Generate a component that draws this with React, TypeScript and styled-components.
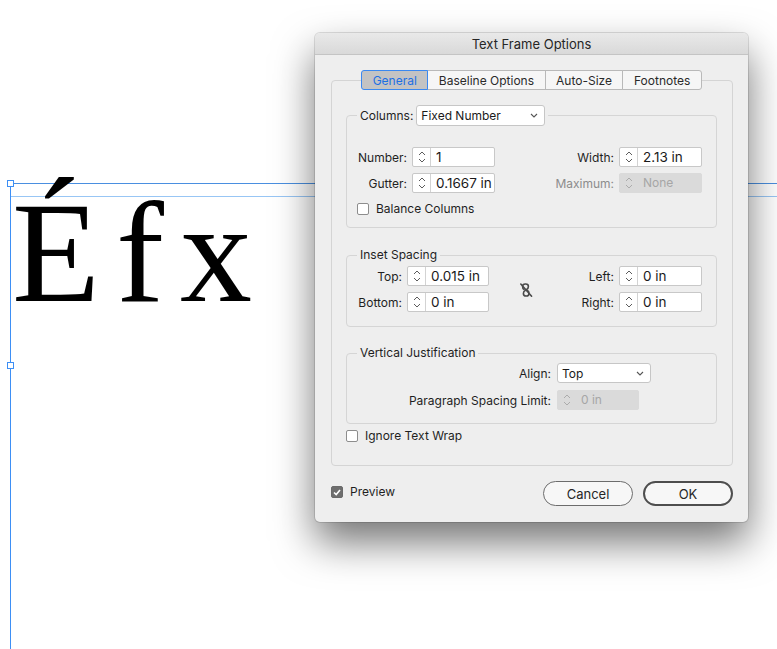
import React from 'react';
import styled, { createGlobalStyle, css } from 'styled-components';

const GlobalStyle = createGlobalStyle`
  html, body { margin: 0; padding: 0; background: #fff; }
  body { font-family: Inter, "Liberation Sans", sans-serif; color: #1f1f1f; }
`;

const Page = styled.div`
  position: relative;
  width: 777px;
  height: 649px;
  overflow: hidden;
  background: #fff;
`;

/* ---- canvas (free layout) ---- */

const TextFrame = styled.div`
  position: absolute;
  left: 10px;
  top: 183px;
  right: 0;
  bottom: 0;
  border-top: 1px solid #4a8fe0;
  border-left: 1px solid #3d8ff5;
`;

const InsetGuide = styled.div`
  position: absolute;
  left: 11px;
  right: 0;
  top: 196px;
  height: 1px;
  background: #98c6f5;
`;

const Glyphs = styled.div`
  margin: -3px 0 0 1px;
  font-family: "Liberation Serif", "Times New Roman", serif;
  font-size: 144px;
  line-height: 1;
  letter-spacing: 16px;
  color: #000;
`;

const Handle = styled.div<{ $top: number }>`
  position: absolute;
  left: 7px;
  top: ${(p) => p.$top}px;
  width: 7px;
  height: 7px;
  box-sizing: border-box;
  border: 1px solid #3d8ff5;
  background: #fff;
`;

/* ---- dialog ---- */

const Dialog = styled.div`
  position: absolute;
  left: 315px;
  top: 33px;
  width: 433px;
  height: 489px;
  box-sizing: border-box;
  background: #eeeeee;
  border-radius: 5px;
  box-shadow: 0 20px 40px rgba(0, 0, 0, 0.55), 0 0 0 1px rgba(0, 0, 0, 0.12);
  display: flex;
  flex-direction: column;
  font-size: 12px;
`;

const TitleBar = styled.div`
  height: 22px;
  box-sizing: border-box;
  border-bottom: 1px solid #c4c4c4;
  border-radius: 5px 5px 0 0;
  background: linear-gradient(#e9e9e9, #d9d9d9);
  display: flex;
  align-items: center;
  justify-content: center;
  font-size: 13px;
  color: #262626;
`;

const Body = styled.div`
  padding: 15px 15px 0 16px;
  display: flex;
  flex-direction: column;
`;

const TabRow = styled.div`
  position: relative;
  z-index: 1;
  display: flex;
  justify-content: center;
  height: 20px;
`;

const Tab = styled.div<{ $active?: boolean }>`
  height: 20px;
  box-sizing: border-box;
  padding: 0 10.5px;
  margin-left: -1px;
  border: 1px solid #b9b9b9;
  background: #f6f6f6;
  display: flex;
  align-items: center;
  color: #2a2a2a;
  &:first-child { border-radius: 3px 0 0 3px; }
  &:last-child { border-radius: 0 3px 3px 0; }
  ${(p) =>
    p.$active &&
    css`
      position: relative;
      background: #c3c3c3;
      border-color: #3a88f0;
      color: #1c6fe3;
    `}
`;

const Panel = styled.div`
  margin-top: -10px;
  border: 1px solid #d4d4d4;
  border-radius: 4px;
  padding: 24px 15px 21px 14px;
  display: flex;
  flex-direction: column;
`;

const Group = styled.fieldset<{ $pad: string; $mt?: number }>`
  margin: ${(p) => p.$mt || 0}px 0 0 0;
  padding: ${(p) => p.$pad};
  min-width: 0;
  border: 1px solid #d5d5d5;
  border-radius: 4px;
  display: flex;
  flex-direction: column;
`;

const Legend = styled.legend`
  padding: 0 3px;
  display: flex;
  align-items: center;
  gap: 3px;
  line-height: 16px;
  color: #1f1f1f;
`;

const Row = styled.div<{ $gap?: number }>`
  display: flex;
  align-items: center;
  justify-content: space-between;
  margin-top: ${(p) => p.$gap || 0}px;
`;

const Pair = styled.div`
  display: flex;
  align-items: center;
  gap: 5px;
`;

const Label = styled.span<{ $w?: number; $disabled?: boolean }>`
  ${(p) => p.$w && css`width: ${p.$w}px;`}
  text-align: right;
  white-space: nowrap;
  color: ${(p) => (p.$disabled ? '#8c8c8c' : '#1f1f1f')};
`;

const Spin = styled.div<{ $w: number; $disabled?: boolean }>`
  width: ${(p) => p.$w}px;
  height: 20px;
  box-sizing: border-box;
  display: flex;
  border: 1px solid ${(p) => (p.$disabled ? '#dadada' : '#c8c8c8')};
  border-radius: 2px;
  background: ${(p) => (p.$disabled ? '#dadada' : '#fff')};
`;

const Arrows = styled.div<{ $disabled?: boolean }>`
  width: 17px;
  flex: none;
  display: flex;
  align-items: center;
  justify-content: center;
  border-right: 1px solid ${(p) => (p.$disabled ? 'transparent' : '#d3d3d3')};
  color: ${(p) => (p.$disabled ? '#ababab' : '#5c5c5c')};
`;

const Value = styled.span<{ $disabled?: boolean }>`
  padding-left: 5px;
  line-height: 18px;
  white-space: nowrap;
  font-size: ${(p) => (p.$disabled ? '12px' : '13.5px')};
  color: ${(p) => (p.$disabled ? '#a6a6a6' : '#1a1a1a')};
`;

const Select = styled.div<{ $w: number; $h: number }>`
  width: ${(p) => p.$w}px;
  height: ${(p) => p.$h}px;
  box-sizing: border-box;
  border: 1px solid #c6c6c6;
  border-radius: 3px;
  background: #fff;
  display: flex;
  align-items: center;
  justify-content: space-between;
  padding: 0 6px 0 4px;
  color: #1a1a1a;
`;

const Check = styled.label<{ $mt?: number }>`
  display: flex;
  align-items: center;
  gap: 7px;
  line-height: 16px;
  margin-top: ${(p) => p.$mt || 0}px;
  color: #1f1f1f;
`;

const Box = styled.span<{ $on?: boolean }>`
  width: 12px;
  height: 12px;
  box-sizing: border-box;
  border-radius: 2px;
  border: 1px solid ${(p) => (p.$on ? '#6a6a6a' : '#8d8d8d')};
  background: ${(p) => (p.$on ? '#6e6e6e' : '#fff')};
  display: flex;
  align-items: center;
  justify-content: center;
`;

const Col = styled.div`
  display: flex;
  flex-direction: column;
  gap: 6px;
`;

const LinkCell = styled.div`
  flex: 1;
  display: flex;
  align-items: center;
  justify-content: center;
  padding-left: 8px;
  padding-top: 2px;
`;

const StackRow = styled.div<{ $gap?: number }>`
  display: flex;
  align-items: center;
  gap: 6px;
  margin-top: ${(p) => p.$gap || 0}px;
`;

const Footer = styled.div`
  display: flex;
  align-items: flex-start;
  margin-top: 15px;
`;

const Spacer = styled.div`
  flex: 1;
`;

const Button = styled.button<{ $default?: boolean }>`
  width: 90px;
  height: 25px;
  margin-left: 10px;
  border-radius: 13px;
  font-family: inherit;
  font-size: 13px;
  color: #262626;
  background: #f7f7f7;
  border: ${(p) => (p.$default ? '2px solid #4e4e4e' : '1px solid #6c6c6c')};
`;

const Chevrons = () => (
  <svg width="8" height="14" viewBox="0 0 8 14" fill="none" stroke="currentColor" strokeWidth="1">
    <path d="M1 5 L4 2 L7 5" />
    <path d="M1 9 L4 12 L7 9" />
  </svg>
);

const Caret = () => (
  <svg width="8" height="5" viewBox="0 0 8 5" fill="none" stroke="#555" strokeWidth="1.1">
    <path d="M1 1 L4 4 L7 1" />
  </svg>
);

const Tick = () => (
  <svg width="8" height="7" viewBox="0 0 8 7" fill="none" stroke="#fff" strokeWidth="1.6">
    <path d="M1 3.5 L3.2 5.6 L7 1" />
  </svg>
);

const BrokenLink = () => (
  <svg width="14" height="16" viewBox="0 0 14 16" fill="none" stroke="#4a4a4a" strokeWidth="1.6" strokeLinecap="round">
    <path d="M5 7.5 C3.6 7 3.6 5.5 3.6 4.5 C3.6 2.8 4.6 2 6.2 2 L6.8 2 C8.4 2 9.4 2.8 9.4 4.5 C9.4 5.8 9 6.8 7.6 7.4" />
    <path d="M6.2 8.4 C4.8 9 4.4 10 4.4 11.4 C4.4 13.1 5.4 14 7 14 L7.4 14 C9 14 10 13.1 10 11.4 C10 10 9.6 9 8.4 8.6" />
    <path d="M1.8 2 L12.6 14.2" />
  </svg>
);

const Stepper = ({ w, value, disabled }: { w: number; value: string; disabled?: boolean }) => (
  <Spin $w={w} $disabled={disabled}>
    <Arrows $disabled={disabled}>
      <Chevrons />
    </Arrows>
    <Value $disabled={disabled}>{value}</Value>
  </Spin>
);

export default function App() {
  return (
    <>
      <GlobalStyle />
      <Page>
        <InsetGuide />
        <TextFrame>
          <Glyphs>Éfx</Glyphs>
        </TextFrame>
        <Handle $top={180} />
        <Handle $top={362} />

        <Dialog>
          <TitleBar>Text Frame Options</TitleBar>
          <Body>
            <TabRow>
              <Tab $active>General</Tab>
              <Tab>Baseline Options</Tab>
              <Tab>Auto-Size</Tab>
              <Tab>Footnotes</Tab>
            </TabRow>
            <Panel>
              <Group $pad="21px 14px 10px 10px">
                <Legend>
                  Columns:
                  <Select $w={129} $h={21}>
                    Fixed Number
                    <Caret />
                  </Select>
                </Legend>
                <Row>
                  <Pair>
                    <Label $w={50}>Number:</Label>
                    <Stepper w={83} value="1" />
                  </Pair>
                  <Pair>
                    <Label>Width:</Label>
                    <Stepper w={83} value="2.13 in" />
                  </Pair>
                </Row>
                <Row $gap={6}>
                  <Pair>
                    <Label $w={50}>Gutter:</Label>
                    <Stepper w={83} value="0.1667 in" />
                  </Pair>
                  <Pair>
                    <Label $disabled>Maximum:</Label>
                    <Stepper w={83} value="None" disabled />
                  </Pair>
                </Row>
                <Row $gap={8}>
                  <Check>
                    <Box />
                    Balance Columns
                  </Check>
                </Row>
              </Group>

              <Group $pad="3px 14px 14px 10px" $mt={19}>
                <Legend>Inset Spacing</Legend>
                <Row>
                  <Col>
                    <Pair>
                      <Label $w={45}>Top:</Label>
                      <Stepper w={82} value="0.015 in" />
                    </Pair>
                    <Pair>
                      <Label $w={45}>Bottom:</Label>
                      <Stepper w={82} value="0 in" />
                    </Pair>
                  </Col>
                  <LinkCell>
                    <BrokenLink />
                  </LinkCell>
                  <Col>
                    <Pair>
                      <Label $w={60}>Left:</Label>
                      <Stepper w={83} value="0 in" />
                    </Pair>
                    <Pair>
                      <Label $w={60}>Right:</Label>
                      <Stepper w={83} value="0 in" />
                    </Pair>
                  </Col>
                </Row>
              </Group>

              <Group $pad="2px 14px 13px 10px" $mt={18}>
                <Legend>Vertical Justification</Legend>
                <StackRow>
                  <Label $w={194}>Align:</Label>
                  <Select $w={94} $h={20}>
                    Top
                    <Caret />
                  </Select>
                </StackRow>
                <StackRow $gap={7}>
                  <Label $w={194}>Paragraph Spacing Limit:</Label>
                  <Stepper w={82} value="0 in" disabled />
                </StackRow>
              </Group>

              <Row $gap={4}>
                <Check>
                  <Box />
                  Ignore Text Wrap
                </Check>
              </Row>
            </Panel>

            <Footer>
              <Check $mt={3}>
                <Box $on>
                  <Tick />
                </Box>
                Preview
              </Check>
              <Spacer />
              <Button>Cancel</Button>
              <Button $default>OK</Button>
            </Footer>
          </Body>
        </Dialog>
      </Page>
    </>
  );
}
